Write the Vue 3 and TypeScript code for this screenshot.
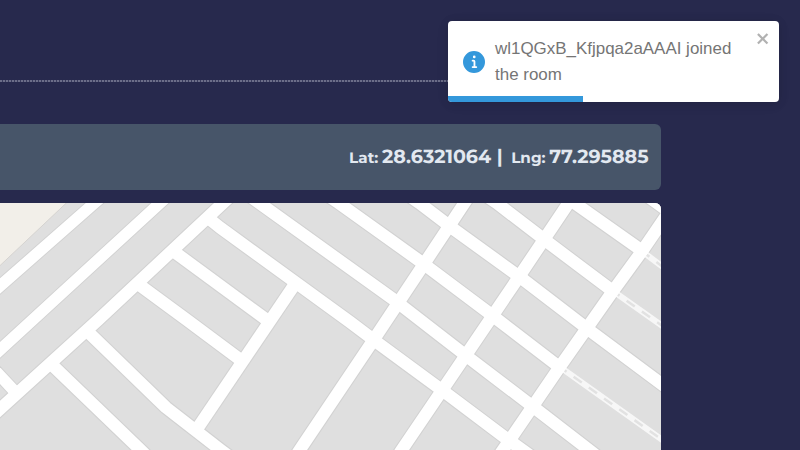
<script setup lang="ts">
import { ref } from 'vue'

interface Road {
  d: string
  narrow?: boolean
}

const position = ref({ lat: '28.6321064', lng: '77.295885' })
const progress = ref(40.8)
const toastOpen = ref(true)

const roads: Road[] = [
  { d: 'M-10 294.8L94.5 203L106 193', narrow: true },
  { d: 'M-10 359L160 203L171 193', narrow: true },
  { d: 'M-10 418L98 320L223 203L234 193' },
  { d: 'M-8 367L18 395', narrow: true },
  { d: 'M48 361L140.5 450L151 460' },
  { d: 'M85 329L166 407.5L220.7 450L234 460' },
  { d: 'M134 281L187 320L242 361' },
  { d: 'M169 248L271 323' },
  { d: 'M205 215.5L220 227.5L350 322L378.7 343.7L446.7 393.7L503 436L535 459' },
  { d: 'M244 192L259.3 203L393 299L470.7 359.3L537.7 410.3L602 460' },
  { d: 'M324 193L338.7 203L419.3 260.7L487.7 312L558 366' },
  { d: 'M405 193L419.3 203L455.3 230.3L524.3 280.3L591.7 332L675 394' },
  { d: 'M482 193L496.7 203L549.7 243.7L612 290.5' },
  { d: 'M560 193L574.5 203L641 250' },
  { d: 'M643 193L657 203L675 216' },
  { d: 'M297 281L195 432' },
  { d: 'M293 460L299.7 450L373.5 340L424 264L464.5 203L471 193' },
  { d: 'M395 460L401.7 450L466 355L519.5 276L568.5 203L575 193' },
  { d: 'M496 460L512.7 435.7L560 366.5L613 291L642.5 250.5L668 213' },
]

const footpaths: string[] = [
  'M560 367L661 439L675 449',
  'M613 291L661 325L675 335',
  'M643 252L661 265.5L675 275',
]
</script>

<template>
  <main class="page">
    <header class="top"></header>
    <section class="tracker">
      <div class="coords">
        <span class="label">Lat:</span>
        <span class="value">{{ position.lat }}</span>
        <span class="bar">|</span>
        <span class="label">Lng:</span>
        <span class="value">{{ position.lng }}</span>
      </div>
      <svg class="map" viewBox="0 203 661 247" width="661" height="247">
        <rect x="0" y="203" width="661" height="247" fill="#dfdfdf" />
        <path d="M-2 200H69.5L-2 267.5Z" fill="#f2efe9" stroke="#d5d3d0" />
        <path v-for="(r, i) in roads" :key="'c' + i" :d="r.d" class="casing" :class="{ narrow: r.narrow }" />
        <path v-for="(p, i) in footpaths" :key="'f' + i" :d="p" class="footpath" />
        <path v-for="(p, i) in footpaths" :key="'d' + i" :d="p" class="dash" />
        <path v-for="(r, i) in roads" :key="'r' + i" :d="r.d" class="road" :class="{ narrow: r.narrow }" />
      </svg>
    </section>

    <div v-if="toastOpen" class="toast" role="alert">
      <div class="toast-body">
        <svg class="info" viewBox="0 0 24 24" width="22" height="22">
          <path fill="#3498db" d="M12 0a12 12 0 1012 12A12.013 12.013 0 0012 0zm.25 5a1.5 1.5 0 11-1.5 1.5 1.5 1.5 0 011.5-1.5zm2.25 13.5h-4a1 1 0 010-2h.75a.25.25 0 00.25-.25v-4.5a.25.25 0 00-.25-.25h-.75a1 1 0 010-2h1a2 2 0 012 2v4.75a.25.25 0 00.25.25h.75a1 1 0 110 2z" />
        </svg>
        <div class="message">wl1QGxB_Kfjpqa2aAAAI joined the room</div>
      </div>
      <button class="close" aria-label="close" @click="toastOpen = false">
        <svg viewBox="0 0 14 16" width="15" height="17">
          <path fill-rule="evenodd" d="M7.71 8.23l3.75 3.75-1.48 1.48-3.75-3.75-3.75 3.75L1 11.98l3.75-3.75L1 4.48 2.48 3l3.75 3.75L9.98 3l1.48 1.48-3.75 3.75z" />
        </svg>
      </button>
      <div class="progress" :style="{ width: progress + '%' }"></div>
    </div>
  </main>
</template>

<style>
body {
  margin: 0;
  background: #27294d;
}
</style>

<style scoped>
.page {
  position: relative;
  width: 800px;
  height: 450px;
  overflow: hidden;
  background: #27294d;
}
.top {
  width: 661px;
  height: 82px;
  background: repeating-linear-gradient(90deg, #6c6e89 0 2px, #3b3d5f 2px 3px) 0 100% / 100% 2px no-repeat;
}
.tracker {
  display: flex;
  flex-direction: column;
  gap: 13px;
  width: 661px;
  padding-top: 42px;
}
.coords {
  display: flex;
  box-sizing: border-box;
  align-items: baseline;
  justify-content: flex-end;
  height: 66px;
  padding: 0 12.5px 0 0;
  border-radius: 0 6px 6px 0;
  background: #475569;
  color: #e2e8f0;
  font-family: Montserrat, Inter, sans-serif;
  font-weight: 700;
  line-height: 66px;
  white-space: nowrap;
  text-rendering: geometricPrecision;
}
.label {
  margin-right: 3.7px;
  font-size: 15.2px;
}
.value,
.bar {
  font-size: 19.1px;
}
.bar {
  margin: 0 8.5px 0 5.6px;
}
.map {
  display: block;
  border-radius: 0 6px 0 0;
}
.casing,
.road,
.footpath,
.dash {
  fill: none;
  stroke-linejoin: round;
}
.casing {
  stroke: #d2d2d2;
  stroke-width: 14.4px;
}
.casing.narrow {
  stroke-width: 13.4px;
}
.road {
  stroke: #fff;
  stroke-width: 12.2px;
}
.road.narrow {
  stroke-width: 11.5px;
}
.footpath {
  stroke: #f7f7f7;
  stroke-width: 6px;
}
.dash {
  stroke: #e2e2e2;
  stroke-width: 2.5px;
  stroke-dasharray: 10 8.7;
  stroke-dashoffset: 2;
}
.toast {
  position: absolute;
  top: 21px;
  left: 448px;
  width: 331px;
  height: 81px;
  overflow: hidden;
  border-radius: 4px;
  background: #fff;
  box-shadow: 0 1px 10px rgba(0, 0, 0, 0.1), 0 2px 15px rgba(0, 0, 0, 0.05);
  color: #757575;
  font: 16.95px/25.5px 'Liberation Sans', Arial, sans-serif;
}
.toast-body {
  display: flex;
  box-sizing: border-box;
  align-items: center;
  gap: 10px;
  height: 81px;
  padding: 0 40px 0 15px;
}
.info {
  flex: none;
}
.close {
  position: absolute;
  top: 9px;
  right: 8px;
  padding: 0;
  border: 0;
  background: transparent;
  color: #000;
  line-height: 0;
  opacity: 0.3;
}
.progress {
  position: absolute;
  bottom: 0;
  left: 0;
  height: 6px;
  background: #3498db;
}
</style>
